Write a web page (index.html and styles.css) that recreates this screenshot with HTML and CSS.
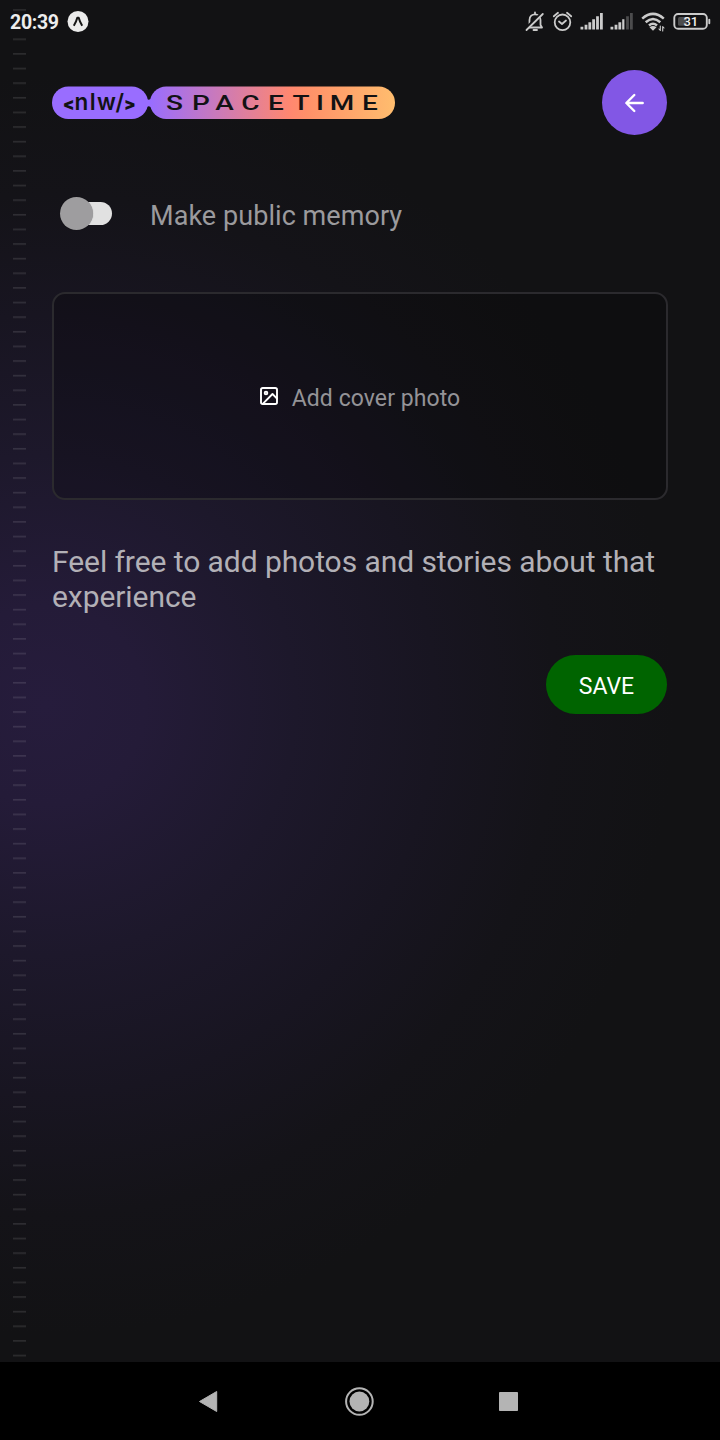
FILE: index.html
```html
<!DOCTYPE html>
<html lang="en">
<head>
<meta charset="utf-8">
<title>New memory</title>
<link rel="stylesheet" href="styles.css">
</head>
<body>
<div class="screen">
  <div class="app">
    <svg class="stripes" width="13" height="1362" aria-hidden="true">
      <defs><pattern id="dash" width="13" height="14.625" patternUnits="userSpaceOnUse" y="9.2"><rect width="13" height="1.6" fill="#fff" fill-opacity=".115"/></pattern></defs>
      <rect y="9" width="13" height="1353" fill="url(#dash)"/>
    </svg>
    <div class="status">
      <span class="clock">20:39</span>
      <svg class="expo" width="22" height="22" viewBox="0 0 22 22"><circle cx="11" cy="10.500" r="10.500" fill="#ebebeb"/><path d="M6.800 14.800Q9.200 11 10.300 6.800H11.700Q12.800 11 15.200 14.800" fill="none" stroke="#161616" stroke-width="2" stroke-linejoin="round"/></svg>
      <svg class="tray" width="190" height="28" viewBox="522 8 190 28" fill="none" stroke="#cbcbcb" stroke-width="1.800" stroke-linecap="round" stroke-linejoin="round">
        <path d="M528 27.500H542L540.500 25V20C540.500 12.500 529.500 12.500 529.500 20V25ZM533.500 30H537M535 12.500V14"/>
        <path d="M525.200 29.500L542.500 13" stroke="#121214" stroke-width="3.600"/>
        <path d="M526.500 30L542.800 14"/>
        <circle cx="562.500" cy="22.300" r="7.800"/><path d="M559 21.500L562 24L566 20.500M553.800 16.300L558 12.800M571.200 16.300L567 12.800"/>
        <g stroke="none" fill="#cbcbcb"><path d="M580.500 26.800h2.800v2.600h-2.800zM584.600 24.800h2.800v4.600h-2.800zM588.400 22.200h2.800v7.200h-2.800zM592.200 19.300h2.800v10.100h-2.800zM596.100 16.300h2.800v13.100h-2.800zM600 13h2.800v16.400h-2.800z"/><path d="M610.500 26.800h2.800v2.600h-2.800zM614.600 24.800h2.800v4.600h-2.800zM618.400 22.200h2.800v7.200h-2.800zM622.200 19.300h2.200v10.100h-2.200z"/><path fill="#4c4c4d" d="M626.100 16.300h2.800v13.100h-2.800zM630 13h2.800v16.400h-2.800z"/><path d="M649.500 27.200Q653 24.800 656.500 27.200L653 30.800Z"/></g>
        <path d="M642.200 18.600Q653 9.200 663.800 18.600M645.700 22.200Q653 15.800 660.300 22.200M649 25.500Q653 22 657 25.500" stroke-width="2.500" stroke-linecap="butt"/>
        <path d="M660.300 26V30.500L659 29M662.700 31V26.500L664 28" stroke-width="1.100"/>
        <rect x="674.300" y="14" width="32.500" height="14.800" rx="3.800" stroke-width="1.900"/><rect x="678" y="17" width="9" height="8.800" rx="1.500" fill="#4c4c4d" stroke="none"/><path d="M709.300 19.800V23.300" stroke-width="1.900"/>
        <text class="charge" x="690.800" y="26" text-anchor="middle" stroke="none">31</text>
      </svg>
    </div>
    <header class="header">
      <svg width="344" height="34" viewBox="52 85.500 344 34" role="img" aria-label="nlw spacetime">
        <defs><linearGradient id="brand" gradientUnits="userSpaceOnUse" x1="150" x2="395" y1="0" y2="0"><stop offset="0" stop-color="#996dff"/><stop offset=".57" stop-color="#ff8770"/><stop offset=".64" stop-color="#ff9069"/><stop offset="1" stop-color="#ffbd6e"/></linearGradient></defs>
        <rect x="52" y="86" width="96" height="32.500" rx="16.250" fill="#996dff"/>
        <path d="M145.500 97Q148.500 101.500 152 97V108Q148.500 103.500 145.500 108Z" fill="#996dff"/>
        <rect x="150" y="86" width="245" height="32.500" rx="16.250" fill="url(#brand)"/>
        <text class="nlw" y="109"><tspan class="bracket" x="62.800" y="109.300">&lt;</tspan><tspan x="74.500" y="109.200">n</tspan><tspan x="89.700">l</tspan><tspan x="97">w</tspan><tspan x="115.500">/</tspan><tspan class="bracket" x="124" y="109.300">&gt;</tspan></text>
        <g transform="scale(1.4 1)"><text class="spacetime" text-anchor="middle" y="109.600" x="124.640 143.570 160.360 178.930 197.140 215 228.570 244.290 264.290">SPACETIME</text></g>
      </svg>
      <button class="back" aria-label="Back"><svg width="26" height="26" viewBox="0 0 26 26" fill="none" stroke="#fff" stroke-width="2.400" stroke-linecap="round" stroke-linejoin="round"><path d="M20.700 13H4.600M12.300 5L4.300 13L12.300 21"/></svg></button>
    </header>
    <label class="public"><span class="switch"><span class="thumb"></span></span><span class="public-label">Make public memory</span></label>
    <div class="cover">
      <svg width="20" height="20" viewBox="0 0 20 20" fill="none" stroke="#fff" stroke-width="1.900" stroke-linecap="round" stroke-linejoin="round"><rect x="2" y="2" width="16" height="16" rx="1.800"/><circle cx="7" cy="7" r="1.350"/><path d="M18 12.600L13.500 8L4 17.600"/></svg>
      <span>Add cover photo</span>
    </div>
    <p class="story">Feel free to add photos and stories about that experience</p>
    <button class="save">SAVE</button>
  </div>
  <nav class="nav">
    <svg width="720" height="78" viewBox="0 0 720 78" fill="#b4b4b4"><path d="M199.500 39.500L216.700 29.500V49.500Z" stroke="#b4b4b4" stroke-linejoin="round"/><circle cx="359.400" cy="39.500" r="9.900"/><circle cx="359.400" cy="39.500" r="13.300" fill="none" stroke="#b4b4b4" stroke-width="2"/><rect x="499" y="30" width="19" height="19" rx=".8"/></svg>
  </nav>
</div>
</body>
</html>
```
FILE: styles.css
```css
* { box-sizing: border-box; }
body { margin: 0; background: #121214; font-family: Roboto, sans-serif; }
button { border: 0; padding: 0; font-family: inherit; }
svg { display: block; }
.screen { width: 720px; height: 1440px; display: flex; flex-direction: column; overflow: hidden; }
.app {
  position: relative;
  height: 1362px;
  display: flex;
  flex-direction: column;
  padding: 0 53px 0 52px;
  background: radial-gradient(circle at 45px 705px, #261c3c 0, #241b38 100px, #1d182b 250px, #181521 390px, #141318 510px, #121214 630px);
}
.stripes { position: absolute; left: 13px; top: 0; }
.status { position: relative; height: 44px; margin: 0 -45px 0 -42px; display: flex; align-items: center; }
.clock { font-size: 19.500px; font-weight: 700; letter-spacing: -.3px; color: #ededed; width: 57px; line-height: 45px; }
.tray { margin-left: auto; }
.charge { font: 500 13px Roboto, sans-serif; fill: #eee; }
.header { height: 65px; margin-top: 26px; display: flex; justify-content: space-between; align-items: center; }
.nlw { font: 600 22.500px Inter, sans-serif; fill: #121214; }
.bracket { font-size: 17px; font-weight: 900; }
.spacetime { font: 500 20px Roboto, sans-serif; fill: #121214; }
.back { width: 65px; height: 65px; border-radius: 50%; background: #8257e5; display: grid; place-items: center; }
.public { height: 40px; margin-top: 60px; padding-left: 8px; display: flex; align-items: center; }
.switch { width: 52px; height: 23px; margin: 0 38px 3px 0; border-radius: 12px; background: linear-gradient(90deg, transparent 15px, #e1e1e1 15px); display: flex; align-items: center; }
.thumb { flex: none; width: 33px; height: 33px; margin-left: -.5px; border-radius: 50%; background: #9e9d9f; box-shadow: 0 0 1px #0006; }
.public-label { font-size: 27px; letter-spacing: .06px; line-height: 40px; padding-top: 2px; color: #9b9a9d; }
.cover { width: 616px; height: 208px; margin-top: 57px; border: 2px solid #2b2a2e; border-radius: 13px; background: #0003; display: flex; align-items: center; justify-content: center; gap: 13px; }
.cover span { font-size: 23px; letter-spacing: .07px; line-height: 32px; padding-top: 5px; color: #949397; }
.cover svg { margin-left: -1px; }
.story { margin: 44px 0 0; font-size: 30px; letter-spacing: -.07px; line-height: 35px; color: #b2b0b6; }
.save { align-self: flex-end; width: 121px; height: 59px; margin-top: 41px; padding-top: 3px; border-radius: 30px; background: #006400; color: #fff; font-size: 23px; }
.nav { height: 78px; background: #000; }
```
